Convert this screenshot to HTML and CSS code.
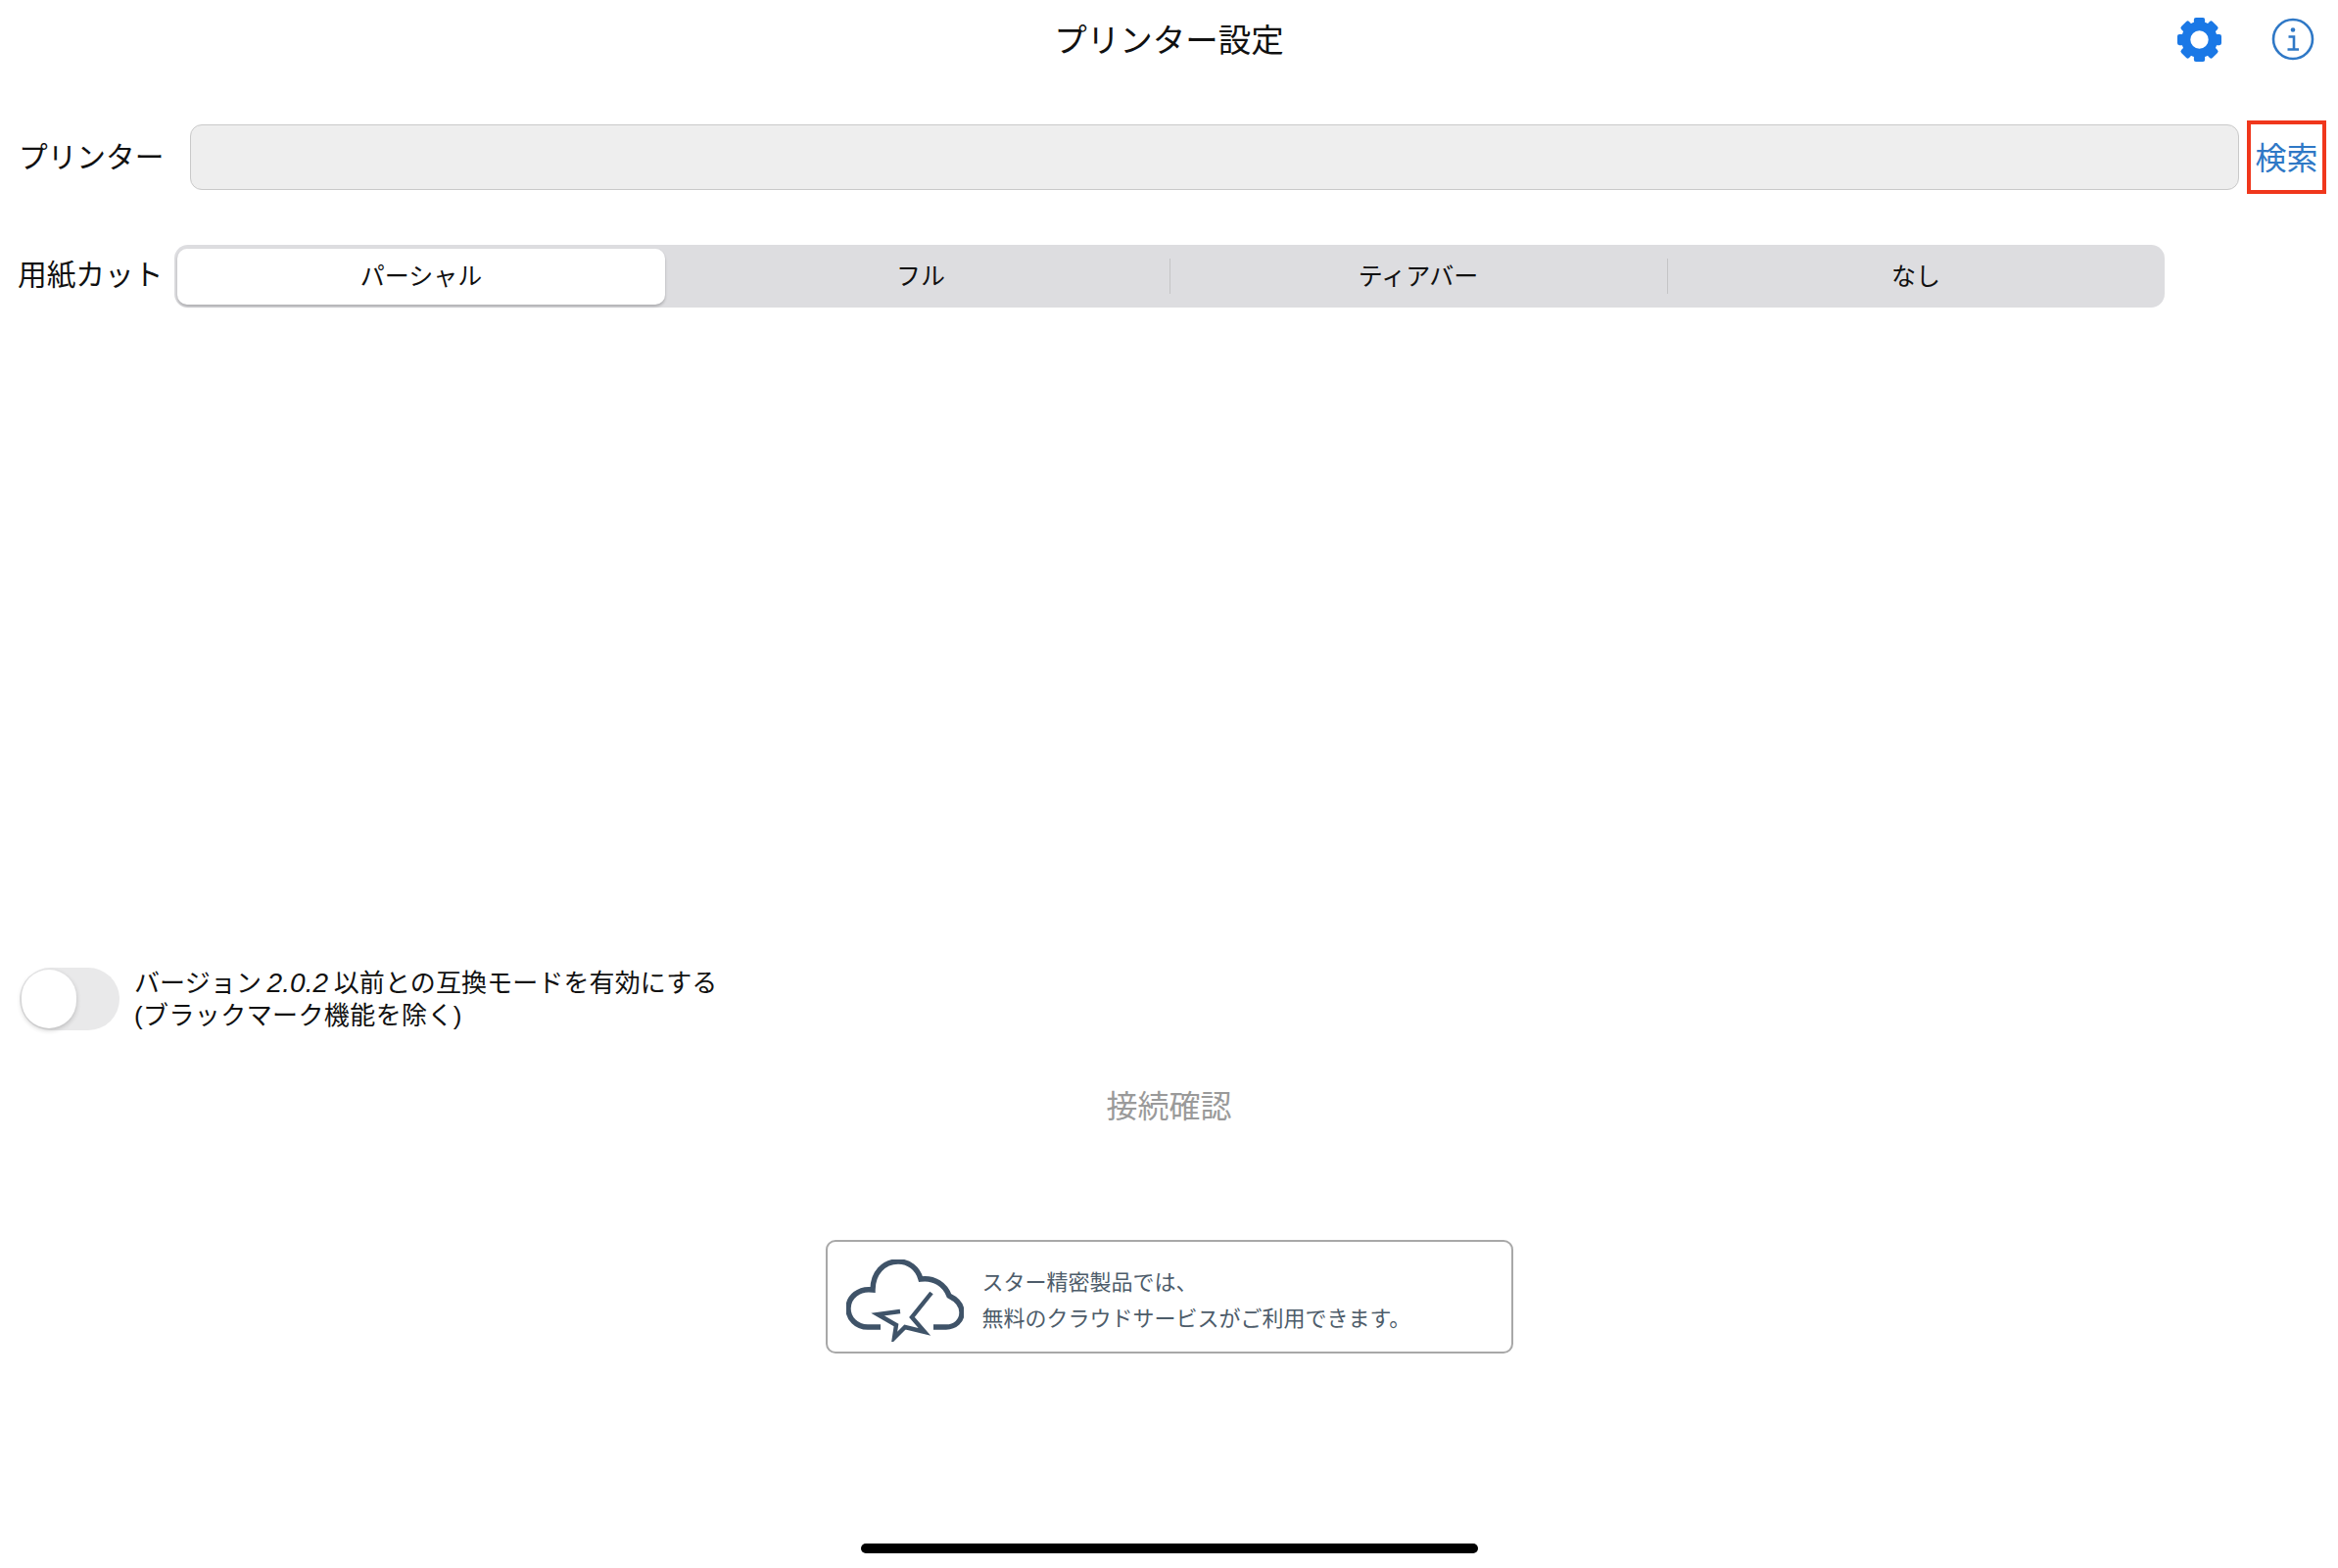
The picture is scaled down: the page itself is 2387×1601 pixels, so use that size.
FILE: index.html
```html
<!DOCTYPE html>
<html lang="ja">
<head>
    <meta charset="UTF-8">
    <meta name="viewport" content="width=device-width, initial-scale=1.0">
    <title>プリンター設定</title>
    <link rel="stylesheet" href="styles.css">
</head>
<body>
    <div class="page">
        <header class="header">
            <div></div>
            <h1 class="title">プリンター設定</h1>
            <div class="header-icons">
                <svg class="icon-gear" viewBox="0 0 44 44" aria-label="設定">
                    <circle cx="22" cy="22" r="13.5" fill="none" stroke="#1a78e6" stroke-width="9"/>
                    <g fill="#1a78e6">
                        <rect x="16.5" y="0" width="11" height="9" rx="2"/>
                        <rect x="16.5" y="35" width="11" height="9" rx="2"/>
                        <rect x="16.5" y="0" width="11" height="9" rx="2" transform="rotate(45 22 22)"/>
                        <rect x="16.5" y="35" width="11" height="9" rx="2" transform="rotate(45 22 22)"/>
                        <rect x="16.5" y="0" width="11" height="9" rx="2" transform="rotate(90 22 22)"/>
                        <rect x="16.5" y="35" width="11" height="9" rx="2" transform="rotate(90 22 22)"/>
                        <rect x="16.5" y="0" width="11" height="9" rx="2" transform="rotate(135 22 22)"/>
                        <rect x="16.5" y="35" width="11" height="9" rx="2" transform="rotate(135 22 22)"/>
                    </g>
                </svg>
                <svg class="icon-info" viewBox="0 0 44 44" aria-label="情報">
                    <circle cx="22" cy="22" r="20" fill="none" stroke="#2f78c6" stroke-width="2.6"/>
                    <circle cx="22" cy="12.5" r="2.3" fill="#2f78c6"/>
                    <path d="M17.5 19.5H23V32M16.5 32.5H28" fill="none" stroke="#2f78c6" stroke-width="2.6"/>
                </svg>
            </div>
        </header>

        <section class="printer-row">
            <label class="row-label">プリンター</label>
            <div class="printer-input"></div>
            <button class="search-btn">検索</button>
        </section>

        <section class="cut-row">
            <label class="cut-label">用紙カット</label>
            <div class="segments">
                <div class="segment selected"><span>パーシャル</span></div>
                <div class="segment"><span>フル</span></div>
                <div class="segment divided"><span>ティアバー</span></div>
                <div class="segment divided"><span>なし</span></div>
            </div>
        </section>

        <section class="compat-row">
            <div class="toggle"><div class="knob"></div></div>
            <p class="compat-text">バージョン <em>2.0.2</em> 以前との互換モードを有効にする<br><span class="compat-note">(ブラックマーク機能を除く)</span></p>
        </section>

        <div class="check-link">接続確認</div>

        <div class="cloud-card">
            <svg class="cloud-icon" viewBox="0 0 120 84">
                <path d="M35 69H22C10 69 2 60 2 50C2 38 13 29 27 31C27 14 38 2 53 2C64 2 73 9 76 20C90 18 101 26 105 37C113 41 118 47 118 54C118 63 111 69 102 69H89" fill="none" stroke="#3f5368" stroke-width="5.4"/>
                <path d="M55 53L32 56L51 67L49 80L60 69L80 74L67 59L87 34" fill="none" stroke="#3f5368" stroke-width="4.4"/>
            </svg>
            <p class="cloud-text">スター精密製品では、<br>無料のクラウドサービスがご利用できます。</p>
        </div>

        <div class="home-bar"></div>
    </div>
</body>
</html>
```

FILE: styles.css
```css
body {
    font-family: 'Liberation Sans', 'Noto Sans CJK JP', sans-serif;
    margin: 0;
    padding: 0;
    background-color: #fff;
    color: #111;
}

.page {
    height: 1601px;
    display: flex;
    flex-direction: column;
    overflow: hidden;
}

.header {
    height: 80px;
    display: grid;
    grid-template-columns: 1fr auto 1fr;
    align-items: center;
}

.title {
    margin: 0 0 3px;
    font-size: 33.5px;
    font-weight: 400;
}

.header-icons {
    display: flex;
    justify-content: flex-end;
    align-items: center;
    gap: 51px;
    padding-right: 24px;
}

.icon-gear {
    width: 45px;
    height: 45px;
}

.icon-info {
    width: 44px;
    height: 44px;
}

.printer-row {
    margin-top: 43px;
    height: 75px;
    display: flex;
    align-items: center;
    padding: 0 12px 0 19px;
}

.row-label {
    width: 175px;
    padding-bottom: 5px;
    font-size: 29.7px;
}

.printer-input {
    flex: 1;
    height: 67px;
    margin-right: 8px;
    box-sizing: border-box;
    background: #eeeeee;
    border: 1px solid #c9c9c9;
    border-radius: 12px;
}

.search-btn {
    width: 81px;
    height: 75px;
    padding: 0 0 4px;
    box-sizing: border-box;
    background: #fff;
    border: 4px solid #f0371c;
    color: #2f78c6;
    font-family: inherit;
    font-size: 32px;
}

.cut-row {
    margin-top: 52px;
    height: 64px;
    display: flex;
    align-items: center;
    padding-left: 18px;
}

.cut-label {
    width: 160px;
    padding-bottom: 8px;
    font-size: 29.7px;
}

.segments {
    width: 2032px;
    height: 64px;
    display: grid;
    grid-template-columns: repeat(4, 1fr);
    background: #dddde0;
    border-radius: 14px;
}

.segment {
    position: relative;
    display: flex;
    align-items: center;
    justify-content: center;
    padding-bottom: 4px;
    font-size: 25px;
}

.segment.selected {
    margin: 4px 7px 3px 3px;
    padding-bottom: 5px;
    background: #fff;
    border-radius: 10px;
    box-shadow: 0 2px 3px rgba(0,0,0,0.22);
}

.segment.divided::before {
    content: "";
    position: absolute;
    left: 0;
    top: 14px;
    bottom: 14px;
    width: 1px;
    background: #c4c4c6;
}

.compat-row {
    margin-top: 671px;
    display: flex;
    align-items: center;
    gap: 15px;
    padding-left: 20px;
}

.toggle {
    width: 102px;
    height: 64px;
    background: #e9e9ea;
    border-radius: 32px;
}

.knob {
    width: 56px;
    height: 60px;
    margin: 2px 0 0 2px;
    background: #fff;
    border-radius: 30px;
    box-shadow: 0 2px 5px rgba(0,0,0,0.2);
}

.compat-text {
    margin: 2px 0 0;
    font-size: 26px;
    line-height: 33px;
    letter-spacing: 0.12px;
}

.compat-text em {
    font-size: 28px;
    margin: 0 -2px;
}

.compat-note {
    letter-spacing: 0.4px;
}

.check-link {
    margin-top: 56px;
    line-height: 40px;
    text-align: center;
    font-size: 32px;
    color: #9a9a9a;
}

.cloud-card {
    margin: 116px auto 0;
    width: 702px;
    height: 116px;
    box-sizing: border-box;
    display: flex;
    align-items: center;
    padding-left: 19px;
    border: 2px solid #a8a8a8;
    border-radius: 10px;
}

.cloud-icon {
    width: 120px;
    height: 84px;
    margin-top: 8px;
    flex-shrink: 0;
}

.cloud-text {
    margin: 0 0 0 19px;
    padding-top: 8px;
    font-size: 22px;
    line-height: 37px;
    color: #4d5c6a;
}

.home-bar {
    margin: auto auto 15px;
    width: 630px;
    height: 10px;
    background: #000;
    border-radius: 5px;
}
```
